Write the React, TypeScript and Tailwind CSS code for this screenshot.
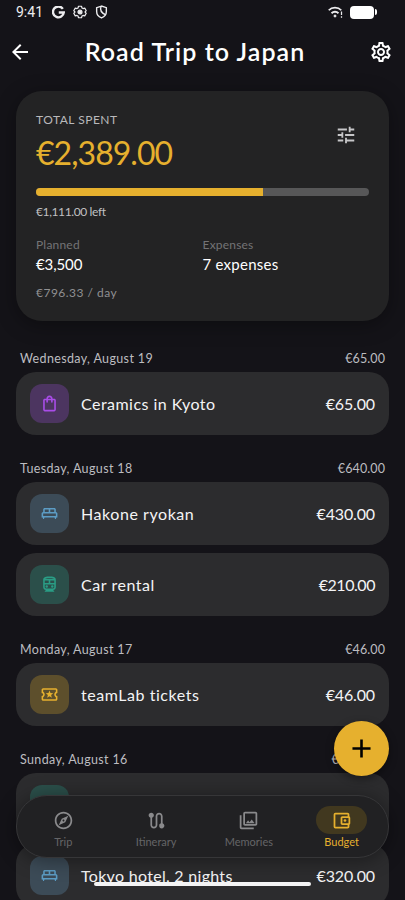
import type { IconType } from 'react-icons'
import {
    MdAdd,
    MdArrowBack,
    MdOutlineAccountBalanceWallet,
    MdOutlineDirectionsSubway,
    MdOutlineExplore,
    MdOutlineKingBed,
    MdOutlineLocalActivity,
    MdOutlinePhotoLibrary,
    MdOutlineSettings,
    MdOutlineShoppingBag,
    MdRoute,
    MdTune,
} from 'react-icons/md'

type Expense = {
    title: string
    titleClass: string
    amount: string
    amountClass: string
    icon: IconType
    iconClass: string
}

type Day = {
    date: string
    total: string
    totalClass: string
    expenses: Expense[]
}

const BED = 'bg-[#3c4b57] text-[#5c9cc4]'
const TRANSIT = 'bg-[#2b4f4a] text-[#2a9d85]'

const days: Day[] = [
    {
        date: 'Wednesday, August 19',
        total: '€65.00',
        totalClass: 'tracking-[0.1px]',
        expenses: [
            {
                title: 'Ceramics in Kyoto',
                titleClass: 'tracking-[0.46px]',
                amount: '€65.00',
                amountClass: 'tracking-[-0.15px]',
                icon: MdOutlineShoppingBag,
                iconClass: 'bg-[#4c3560] text-[#a94de8]',
            },
        ],
    },
    {
        date: 'Tuesday, August 18',
        total: '€640.00',
        totalClass: 'tracking-[0.1px]',
        expenses: [
            {
                title: 'Hakone ryokan',
                titleClass: 'tracking-[0.56px]',
                amount: '€430.00',
                amountClass: 'tracking-[-0.15px]',
                icon: MdOutlineKingBed,
                iconClass: BED,
            },
            {
                title: 'Car rental',
                titleClass: 'tracking-[0.54px]',
                amount: '€210.00',
                amountClass: 'tracking-[-0.45px]',
                icon: MdOutlineDirectionsSubway,
                iconClass: TRANSIT,
            },
        ],
    },
    {
        date: 'Monday, August 17',
        total: '€46.00',
        totalClass: 'tracking-[0.1px]',
        expenses: [
            {
                title: 'teamLab tickets',
                titleClass: 'tracking-[0.54px]',
                amount: '€46.00',
                amountClass: 'tracking-[-0.15px]',
                icon: MdOutlineLocalActivity,
                iconClass: 'bg-[#5d4f2c] text-[#e6b02e]',
            },
        ],
    },
    {
        date: 'Sunday, August 16',
        total: '€1,638.00',
        totalClass: 'tracking-[-0.35px]',
        expenses: [
            {
                title: 'Airport train',
                titleClass: 'tracking-[0.3px]',
                amount: '€162.00',
                amountClass: 'tracking-[-0.15px]',
                icon: MdOutlineDirectionsSubway,
                iconClass: TRANSIT,
            },
            {
                title: 'Tokyo hotel, 2 nights',
                titleClass: 'tracking-[0.3px]',
                amount: '€320.00',
                amountClass: 'tracking-[-0.15px]',
                icon: MdOutlineKingBed,
                iconClass: BED,
            },
        ],
    },
]

const tabs = [
    { label: 'Trip', icon: MdOutlineExplore, active: false },
    { label: 'Itinerary', icon: MdRoute, active: false },
    { label: 'Memories', icon: MdOutlinePhotoLibrary, active: false },
    { label: 'Budget', icon: MdOutlineAccountBalanceWallet, active: true },
]

const StatusBar = () => (
    <div className="flex h-6 items-center justify-between pl-4 pr-[28px] text-[#ececee]">
        <div className="flex items-center">
            <span className="w-[36px] font-[Roboto] text-[14px] leading-6">9:41</span>
            <svg className="h-[13px] w-[13px]" viewBox="0 0 24 24" fill="none" stroke="currentColor" strokeWidth="4.4">
                <path d="M20 5.2A10 10 0 1 0 21.8 12H12.5" />
            </svg>
            {/* Six-lobed gear with a solid hub */}
            <svg className="ml-[8px] h-[14px] w-[14px]" viewBox="0 0 28 28" fill="none" stroke="currentColor" strokeWidth="2.4" strokeLinejoin="round">
                <path d="M11 2.500h6l1 3.500 2 1.200 3.500-1 3 5.200L24 14l2.500 2.600-3 5.200-3.500-1L18 22l-1 3.500h-6L10 22l-2-1.200-3.500 1-3-5.200L4 14l-2.500-2.600 3-5.200 3.500 1L10 6z" />
                <circle cx="14" cy="14" r="4" fill="currentColor" />
            </svg>
            <svg className="ml-[8px] h-[14px] w-[13px]" viewBox="0 0 24 26" fill="none" stroke="currentColor" strokeWidth="2.6">
                <path d="M12 2 3 5v7c0 6 4 10 9 12 5-2 9-6 9-12V5z" />
                <path d="M11 3c-2 6 0 11 8 15" />
            </svg>
        </div>
        <div className="flex items-center">
            <svg className="h-[12px] w-[15px]" viewBox="0 0 30 24" fill="none" stroke="currentColor" strokeWidth="3.6">
                <path d="M1.500 8.500C8 1.500 20 1.500 26.500 8.500M7 14.500C11 10.500 17 10.500 21 14.500" />
                <circle cx="14" cy="20" r="2" fill="currentColor" strokeWidth="2" />
                <path d="M27 11v7M27 20.500v3" strokeWidth="2.500" />
            </svg>
            <div className="ml-[7px] h-[13px] w-[24px] rounded-[4px] bg-white" />
            <div className="ml-px h-[6px] w-[2px] rounded-r-full bg-white" />
        </div>
    </div>
)

const Header = () => (
    <header className="flex h-14 items-center px-2 text-white">
        <MdArrowBack className="h-6 w-6" />
        <h1 className="mx-auto pr-[11px] text-[25px] font-semibold tracking-[1.05px] whitespace-nowrap">
            Road Trip to Japan
        </h1>
        <MdOutlineSettings className="mr-[4px] h-6 w-6" />
    </header>
)

const SummaryCard = () => (
    <section className="h-[230px] rounded-[26px] bg-[#232324] px-5 pt-[21px] shadow-[0_4px_20px_rgba(0,0,0,0.35)]">
        <div className="flex items-start justify-between">
            <div>
                <p className="text-[12px] leading-4 tracking-[0.5px] text-[#b9b9bb]">TOTAL SPENT</p>
                <p className="mt-[5px] text-[32px] leading-10 tracking-[-0.95px] text-[#e6b02e]">€2,389.00</p>
            </div>
            <MdTune className="mt-3 mr-3 h-[22px] w-[22px] text-[#c6c6c8]" />
        </div>
        <div className="mt-[15px] h-2 overflow-hidden rounded-full bg-[#575758]">
            <div className="h-full w-[68.3%] bg-[#e6b02e]" />
        </div>
        <p className="mt-2 text-[12px] leading-4 tracking-[-0.38px] text-[#c0c0c2]">€1,111.00 left</p>
        <div className="mt-[17px] grid grid-cols-2">
            <div>
                <p className="text-[12px] leading-4 tracking-[0.2px] text-[#747476]">Planned</p>
                <p className="mt-px text-[15px] leading-5 tracking-[-0.1px] text-white">€3,500</p>
            </div>
            <div>
                <p className="text-[12px] leading-4 tracking-[0.2px] text-[#747476]">Expenses</p>
                <p className="mt-px text-[15px] leading-5 tracking-[0.25px] text-white">7 expenses</p>
            </div>
        </div>
        <p className="mt-[11px] text-[12px] leading-4 tracking-[0.48px] text-[#909092]">€796.33 / day</p>
    </section>
)

const ExpenseRow = ({ expense }: { expense: Expense }) => {
    const Icon = expense.icon
    return (
        <div className="flex h-[63px] items-center rounded-[20px] bg-[#2c2c2e] px-[14px]">
            <div className={`flex h-[39px] w-[39px] items-center justify-center rounded-xl ${expense.iconClass}`}>
                <Icon className="h-[19px] w-[19px]" />
            </div>
            <span className={`ml-3 text-[16px] text-[#f4f4f5] ${expense.titleClass}`}>{expense.title}</span>
            <span className={`ml-auto text-[16px] text-[#f4f4f5] ${expense.amountClass}`}>{expense.amount}</span>
        </div>
    )
}

const TabBar = () => (
    <nav className="absolute inset-x-4 bottom-[42px] grid h-[63px] grid-cols-4 rounded-[31px] border border-[#363638] bg-[#212123] shadow-[0_2px_20px_rgba(0,0,0,0.4)]">
        {tabs.map(({ label, icon: Icon, active }) => (
            <div
                key={label}
                className={`flex flex-col items-center pt-[10px] ${active ? 'text-[#e6b02e]' : 'text-[#8a8a8c]'}`}
            >
                <div className={`flex h-7 w-[51px] items-center justify-center rounded-full ${active ? 'bg-[#41381f]' : ''}`}>
                    <Icon className="h-[21px] w-[21px]" />
                </div>
                <span className={`text-[11px] leading-4 ${active ? '' : 'text-[#656567]'}`}>{label}</span>
            </div>
        ))}
    </nav>
)

const App = () => {
    return (
        <div className="relative h-[900px] w-[405px] overflow-hidden bg-[#141318] font-[Lato,sans-serif]">
            <StatusBar />
            <Header />
            <main className="px-4 pt-[11px]">
                <SummaryCard />
                <div className="pt-[30px]">
                    {days.map((day) => (
                        <section key={day.date} className="mb-[26px]">
                            <div className="flex h-[21px] items-start justify-between px-1 text-[12.5px] leading-4 text-[#bdbdc0]">
                                <span className="tracking-[0.36px]">{day.date}</span>
                                <span className={day.totalClass}>{day.total}</span>
                            </div>
                            <div className="flex flex-col gap-2">
                                {day.expenses.map((expense) => (
                                    <ExpenseRow key={expense.title} expense={expense} />
                                ))}
                            </div>
                        </section>
                    ))}
                </div>
            </main>

            <button
                aria-label="Add expense"
                className="absolute right-4 bottom-[124px] flex h-[55px] w-[55px] items-center justify-center rounded-full bg-[#e6b02e] text-black shadow-[0_3px_8px_rgba(0,0,0,0.4)]"
            >
                <MdAdd className="h-[31px] w-[31px]" />
            </button>
            <TabBar />
            {/* System gesture handle */}
            <div className="absolute bottom-[14px] left-[94px] h-[4px] w-[217px] rounded-full bg-[#f4f4f5]" />
        </div>
    )
}

export default App
